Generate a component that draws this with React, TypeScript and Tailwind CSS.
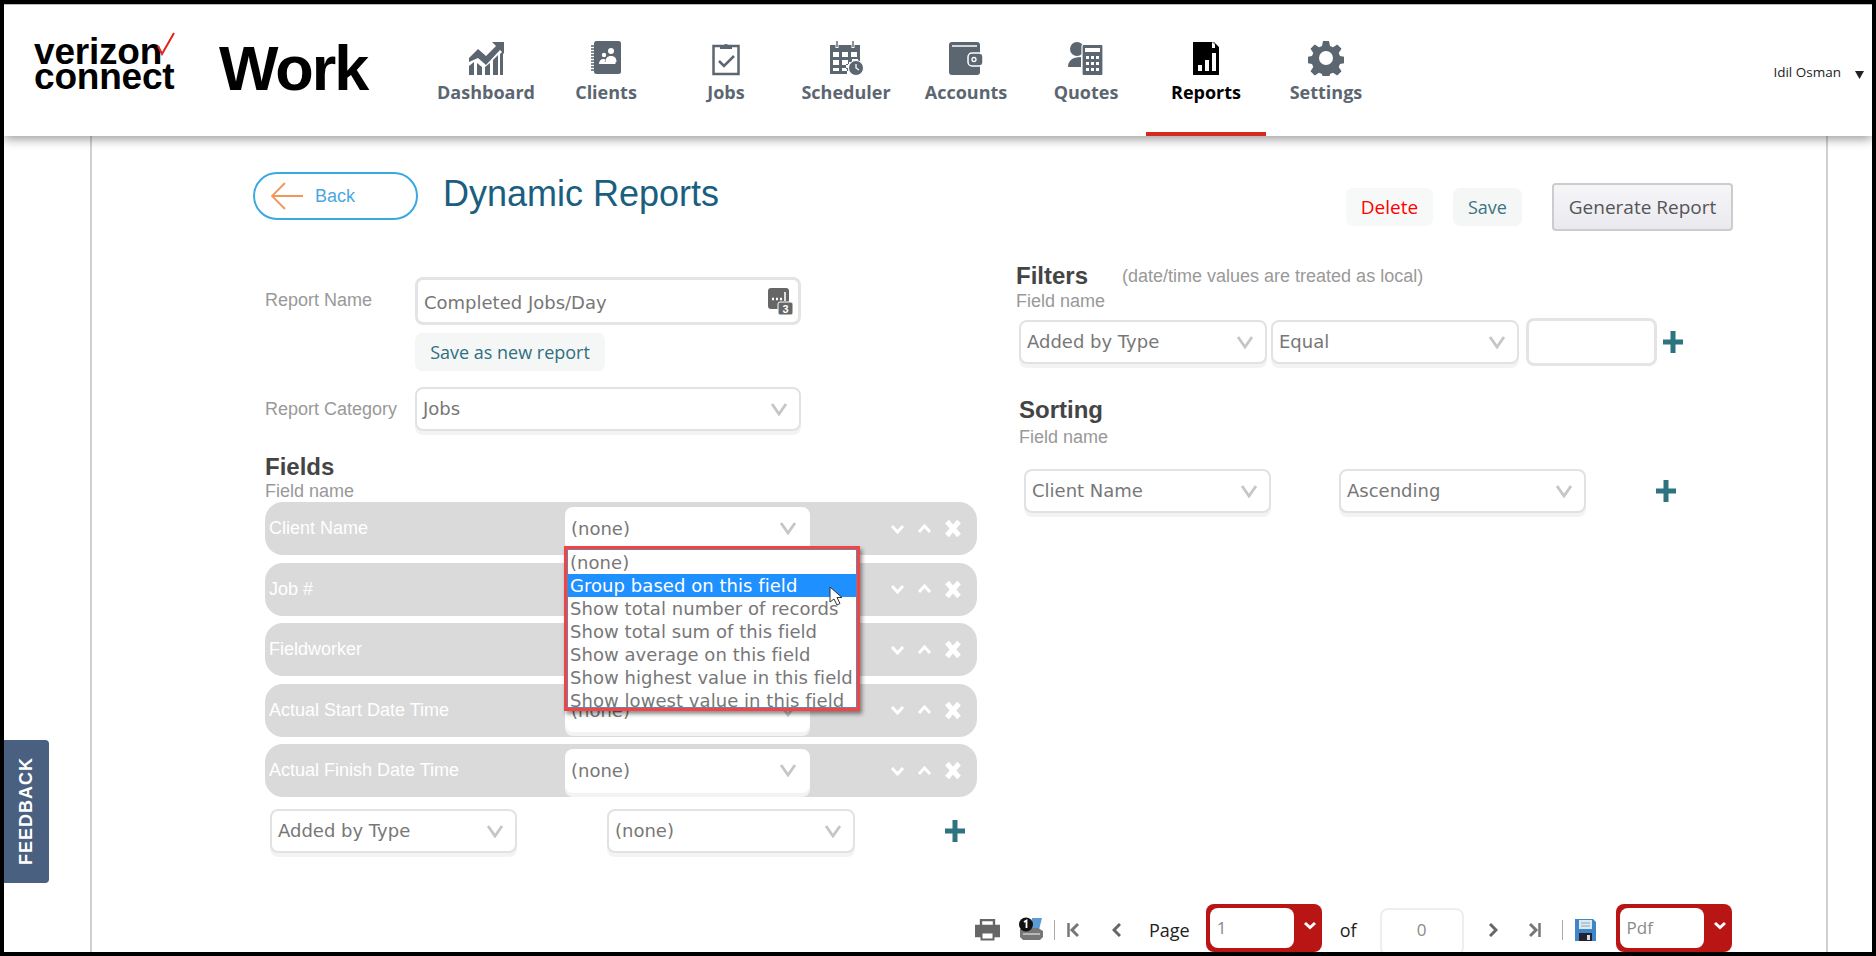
import { ReactNode } from "react";

const sans = "font-['Liberation_Sans',Arial,sans-serif]";
const deja = "font-['DejaVu_Sans',Verdana,sans-serif]";
const open = "font-['Open_Sans',sans-serif]";

function DashboardIcon() {
  return (
    <svg width="36" height="36" viewBox="0 0 36 36" fill="#5b6670">
      <path d="M1 35V26l5-4v13zM9 35V23l5 4v8zM17 35V27l5-4v12zM25 35V20l5-5v20zM32 35V14l3-3v24z" />
      <path d="M1 22V18l9-9 8 7 10-10-4-4h12v12l-4-4-14 15-8-7z" />
    </svg>
  );
}

function ClientsIcon() {
  return (
    <svg width="36" height="36" viewBox="0 0 36 36">
      <rect x="6" y="1" width="27" height="33" rx="2.500" fill="#5b6670" />
      <path d="M3 6h4M3 9h4M3 12h4M3 15h4M3 18h4M3 21h4M3 24h4M3 27h4M3 30h4" stroke="#5b6670" strokeWidth="1.400" />
      <circle cx="23" cy="11" r="3" fill="#fff" />
      <path d="M17.500 22c0-4 2-6 5.500-6s5.500 2 5.500 6z" fill="#fff" />
      <circle cx="16" cy="15" r="2.200" fill="#fff" />
      <path d="M11 24c0-3 1.500-5 4.500-5 1 0 1.500.3 2 .7L16 24z" fill="#fff" />
      <path d="M14 24c0-1 .5-1.500 1.500-2h12v2z" fill="#fff" />
    </svg>
  );
}

function JobsIcon() {
  return (
    <svg width="36" height="36" viewBox="0 0 36 36" fill="none">
      <rect x="5.500" y="6" width="25" height="28" stroke="#5b6670" strokeWidth="2.500" />
      <path d="M12 9V5h4a2.500 2.500 0 0 1 4 0h4v4z" fill="#5b6670" />
      <path d="M11 21l5 5 10-10" stroke="#5b6670" strokeWidth="2.500" />
    </svg>
  );
}

function SchedulerIcon() {
  return (
    <svg width="36" height="36" viewBox="0 0 36 36" fill="none">
      <path d="M2 5h30v17h-2v-3h-6v3h-3v2h-3v5h1v5H2zM5 12v5h6v-5zM14 12v5h6v-5zM23 12v5h6v-5zM5 20v5h6v-5zM14 20v5h6v-5zM5 28v3h6v-3zM14 28v3h6v-3z" fill="#5b6670" fillRule="evenodd" />
      <path d="M9 1v7M25 1v7" stroke="#fff" strokeWidth="3" />
      <path d="M9 1v6M25 1v6" stroke="#5b6670" strokeWidth="1.400" />
      <circle cx="28" cy="28" r="7.500" fill="#5b6670" stroke="#fff" strokeWidth="1" />
      <path d="M28 24v4l3 2" stroke="#fff" strokeWidth="1.300" />
    </svg>
  );
}

function AccountsIcon() {
  return (
    <svg width="36" height="36" viewBox="0 0 36 36">
      <rect x="1" y="2" width="31" height="33" rx="3" fill="#5b6670" />
      <path d="M4 6h25" stroke="#d5d8da" strokeWidth="2" />
      <rect x="20" y="13" width="15" height="13" rx="4" fill="#5b6670" stroke="#fff" strokeWidth="1.500" />
      <circle cx="26" cy="19.500" r="2" fill="none" stroke="#fff" strokeWidth="1.300" />
    </svg>
  );
}

function QuotesIcon() {
  return (
    <svg width="36" height="36" viewBox="0 0 36 36">
      <circle cx="9" cy="9" r="7" fill="#5b6670" />
      <path d="M0 27c0-6 4-10 13-10v10z" fill="#5b6670" />
      <rect x="14" y="4.500" width="21" height="31" rx="1.500" fill="#5b6670" stroke="#fff" strokeWidth="1.200" />
      <rect x="17" y="8" width="15" height="4" fill="#fff" />
      <path d="M18 16h3v3h-3zM23 16h3v3h-3zM28 16h3v3h-3zM18 22h3v3h-3zM23 22h3v3h-3zM28 22h3v3h-3zM18 28h3v3h-3zM23 28h3v3h-3zM28 28h3v3h-3z" fill="#fff" />
    </svg>
  );
}

function ReportsIcon() {
  return (
    <svg width="36" height="36" viewBox="0 0 36 36">
      <path d="M5 2h20l6 6v27H5z" fill="#000" />
      <path d="M24 2l7 6h-7z" fill="#fff" />
      <path d="M26 2l5 5v1h-4v-6z" fill="#000" />
      <path d="M10 25h4v6h-4zM17 20h4v11h-4zM24 13h4v18h-4z" fill="#fff" />
    </svg>
  );
}

function SettingsIcon() {
  return (
    <svg width="36" height="36" viewBox="0 0 36 36">
      <path
        fillRule="evenodd"
        fill="#5b6670"
        d="M15 1h6l1 5 3 1.300 4.300-2.800 4.200 4.200-2.800 4.300 1.300 3 5 1v6l-5 1-1.300 3 2.800 4.300-4.200 4.200-4.300-2.800-3 1.300-1 5h-6l-1-5-3-1.300-4.300 2.800-4.200-4.200 2.800-4.300-1.300-3-5-1v-6l5-1 1.300-3-2.800-4.300 4.200-4.200 4.300 2.800 3-1.300zM18 11a7 7 0 1 0 0 14 7 7 0 0 0 0-14z"
      />
    </svg>
  );
}

const navItems: { label: string; icon: ReactNode; active?: boolean }[] = [
  { label: "Dashboard", icon: <DashboardIcon /> },
  { label: "Clients", icon: <ClientsIcon /> },
  { label: "Jobs", icon: <JobsIcon /> },
  { label: "Scheduler", icon: <SchedulerIcon /> },
  { label: "Accounts", icon: <AccountsIcon /> },
  { label: "Quotes", icon: <QuotesIcon /> },
  { label: "Reports", icon: <ReportsIcon />, active: true },
  { label: "Settings", icon: <SettingsIcon /> },
];

function Chevron({ className = "" }: { className?: string }) {
  return (
    <svg width="18" height="13" viewBox="0 0 18 13" fill="none" className={className}>
      <path d="M2 1l7 10 7-10" stroke="#c6c6c6" strokeWidth="2.800" />
    </svg>
  );
}

function Select({ value, className = "", textClass = "pb-[2px]" }: { value?: string; className?: string; textClass?: string }) {
  return (
    <div className={`flex h-[44px] items-center justify-between rounded-[8px] border-2 border-[#e2e2e2] bg-white pl-[6px] pr-[11px] text-[18px] text-[#777] shadow-[0_4px_0_#f3f3f3] ${deja} ${className}`}>
      <span className={textClass}>{value}</span>
      <Chevron />
    </div>
  );
}

function Plus({ className = "" }: { className?: string }) {
  return (
    <svg width="20" height="22" viewBox="0 0 20 22" className={className}>
      <path d="M7.500 0h5v8.500H20v5h-7.500V22h-5v-8.500H0v-5h7.500z" fill="#2d7480" />
    </svg>
  );
}

function RowTools() {
  return (
    <div className="ml-auto mr-[15px] flex items-center gap-[12px]">
      <svg width="15" height="10" viewBox="0 0 15 10" fill="none"><path d="M2 2l5.500 6L13 2" stroke="#fff" strokeWidth="3" /></svg>
      <svg width="15" height="10" viewBox="0 0 15 10" fill="none"><path d="M2 8l5.500-6L13 8" stroke="#fff" strokeWidth="3" /></svg>
      <svg width="18" height="19" viewBox="0 0 18 19" fill="none"><path d="M3 2.500l12 14M15 2.500l-12 14" stroke="#fff" strokeWidth="5" /></svg>
    </div>
  );
}

const options = [
  "(none)",
  "Group based on this field",
  "Show total number of records",
  "Show total sum of this field",
  "Show average on this field",
  "Show highest value in this field",
  "Show lowest value in this field",
];

function FieldRow({ label, value, open: isOpen }: { label: string; value?: string; open?: boolean }) {
  return (
    <div className="flex h-[53px] items-center rounded-[18px] bg-[#dadada]">
      <div className={`ml-[4px] w-[296px] text-[18px] text-white ${sans}`}>{label}</div>
      <div className="relative">
        <Select value={value} textClass="" className="h-[39px] w-[245px] !border-0 !pl-[6px] !pr-[13px]" />
        {isOpen && (
          <div className="absolute left-[-1px] top-[39px] z-10 h-[165px] w-[296px] overflow-hidden border-[3px] border-[#f14545] bg-white shadow-[2px_3px_4px_rgba(0,0,0,0.45)]">
            <div className={`h-full border border-[#6b83a8] pt-[1px] text-[18px] tracking-[0.05px] text-[#777] ${deja}`}>
              {options.map((o, i) => (
                <div key={o} className={`h-[23px] whitespace-nowrap pl-[2px] leading-[24px] ${i === 1 ? "bg-[#1e90ff] text-white" : ""}`}>{o}</div>
              ))}
            </div>
            <svg width="14" height="20" viewBox="0 0 14 20" className="absolute left-[262px] top-[37px]">
              <path d="M1 1v15l4-3 3 6 3-1.500-3-6h5z" fill="#fff" stroke="#333" strokeWidth="1" />
            </svg>
          </div>
        )}
      </div>
      <RowTools />
    </div>
  );
}

function RedSelect({ value }: { value: string }) {
  return (
    <div className="flex h-[48px] w-[116px] items-start rounded-[8px] bg-[#b91515] p-[4px] pr-0">
      <div className="h-full w-[84px] rounded-[8px] bg-white pl-[7px] pt-[8px] text-[17px] leading-[24px] text-[#8a8a8a]">{value}</div>
      <svg width="14" height="9" viewBox="0 0 14 9" fill="none" className="ml-[9px] mt-[13px]"><path d="M2 2l5 4.500L12 2" stroke="#fff" strokeWidth="3" /></svg>
    </div>
  );
}

function PrintIcon() {
  return (
    <svg width="25" height="22" viewBox="0 0 25 22">
      <path d="M6 7V1h13v6M6 17H1V7h23v10h-5" fill="none" stroke="#666" strokeWidth="2.400" />
      <path d="M1 8h23v9h-5v-3H6v3H1z" fill="#666" />
      <rect x="6.500" y="13.500" width="12" height="7" fill="none" stroke="#666" strokeWidth="2" />
    </svg>
  );
}

function PrintQueueIcon() {
  return (
    <svg width="26" height="24" viewBox="0 0 26 24">
      <path d="M14 1h10l-3 12h-8z" fill="#5a9bd5" />
      <path d="M2 12l6-1h12l5 3v6l-3 3H5l-3-3z" fill="#777" />
      <path d="M5 17h17" stroke="#ccc" strokeWidth="1.500" />
      <circle cx="8" cy="7.500" r="7" fill="#111" />
      <path d="M6 5l2.500-1.500V11" stroke="#fff" strokeWidth="1.800" fill="none" />
    </svg>
  );
}

function SaveIcon() {
  return (
    <svg width="23" height="24" viewBox="0 0 23 24">
      <path d="M1 1h18l3 3v19H1z" fill="#3f86c6" />
      <rect x="5" y="2" width="13" height="9" fill="#dce8f3" />
      <path d="M7 5h9M7 8h9" stroke="#8aa" strokeWidth="1" />
      <rect x="5" y="15" width="13" height="8" fill="#223" />
      <rect x="13" y="17" width="3" height="5" fill="#ddd" />
    </svg>
  );
}

export default function App() {
  return (
    <div className={`h-[956px] w-[1876px] overflow-hidden bg-black pb-[4px] pl-[4px] pr-[4px] pt-[4px] ${sans}`}>
      <div className="relative flex h-full flex-col overflow-hidden bg-white">
        <header className="relative z-20 flex h-[132px] shrink-0 items-start border-t border-[#bbb] bg-white shadow-[0_3px_10px_rgba(0,0,0,0.4)]">
          <div className="ml-[30px] mt-[34px] w-[150px] text-[37px] font-bold leading-[25px] tracking-[-0.2px] text-black">
            <div className="relative">
              verizon
              <svg width="20" height="24" viewBox="0 0 20 24" className="absolute left-[122px] top-[-7px]">
                <path d="M2 14l4 8L18 1" fill="none" stroke="#e0261c" strokeWidth="2" />
              </svg>
            </div>
            <div>connect</div>
          </div>
          <div className="ml-[35px] mt-[28px] w-[207px] text-[63px] font-bold leading-[70px] tracking-[-2px] text-black">Work</div>
          <nav className="flex">
            {navItems.map((n) => (
              <div key={n.label} className={`flex h-[131px] w-[120px] flex-col items-center pt-[35px] ${n.active ? "border-b-4 border-[#d52b1e] text-black" : "text-[#5b6670]"}`}>
                {n.icon}
                <span className={`mt-[4px] text-[18px] font-bold leading-[24px] ${open}`}>{n.label}</span>
              </div>
            ))}
          </nav>
          <div className={`ml-auto mr-[8px] mt-[57px] flex items-center text-[13.500px] text-[#222] ${open}`}>
            Idil Osman
            <svg width="9" height="8" viewBox="0 0 9 8" className="ml-[14px] mt-[6px]"><path d="M0 0h9L4.500 8z" fill="#222" /></svg>
          </div>
        </header>

        <main className="ml-[86px] mr-[44px] min-h-0 flex-1 border-x-2 border-[#d0d0d0]">
          <div className="flex items-start pl-[161px] pr-[93px] pt-[36px]">
            <div className="flex h-[48px] w-[165px] items-center rounded-full border-2 border-[#3aa9e0] pl-[15px]">
              <svg width="34" height="28" viewBox="0 0 34 28" fill="none"><path d="M33 14H2M15 1L2 14l13 13" stroke="#f0975a" strokeWidth="1.800" /></svg>
              <span className="ml-[11px] text-[18px] text-[#4aa8df]">Back</span>
            </div>
            <h1 className="ml-[25px] text-[36px] leading-[44px] text-[#1a5e80]">Dynamic Reports</h1>
            <div className={`ml-auto mt-[11px] flex items-center ${open}`}>
              <div className="flex h-[38px] w-[87px] items-center justify-center rounded-[7px] bg-[#f7f8f8] text-[19px] text-[#f00]">Delete</div>
              <div className="ml-[20px] flex h-[38px] w-[69px] items-center justify-center rounded-[7px] bg-[#f5f7f7] text-[18px] text-[#3b7480]">Save</div>
              <div className="ml-[30px] flex h-[48px] w-[181px] items-center justify-center rounded-[4px] border-2 border-[#ccc] bg-gradient-to-b from-[#f6f6f9] to-[#e9e9ef] text-[19px] text-[#555]">Generate Report</div>
            </div>
          </div>

          <div className="mt-[32px] flex">
            <section className="ml-[173px] w-[712px] pt-[14px]">
              <div className="flex items-start">
                <label className="w-[150px] pt-[10px] text-[18px] text-[#999]">Report Name</label>
                <div className={`flex h-[48px] w-[386px] items-center justify-between rounded-[8px] border-[3px] border-[#e4e4e4] bg-white pl-[6px] pr-[5px] text-[18px] text-[#777] ${deja}`}>
                  <span className="pt-[3px]">Completed Jobs/Day</span>
                  <svg width="25" height="27" viewBox="0 0 25 27">
                    <rect x="0" y="0" width="21" height="21" rx="3" fill="#666" />
                    <path d="M4 11h2M8 11h2M12 11h2" stroke="#fff" strokeWidth="2.400" />
                    <path d="M17 4v9" stroke="#fff" strokeWidth="1.600" />
                    <rect x="10" y="14" width="15" height="13" rx="2" fill="#666" stroke="#fff" strokeWidth="1" />
                    <text x="17.500" y="25" fontSize="11" fontWeight="700" fill="#fff" textAnchor="middle" fontFamily="Liberation Sans">3</text>
                  </svg>
                </div>
              </div>
              <div className={`ml-[150px] mt-[8px] flex h-[38px] w-[190px] items-center justify-center rounded-[7px] bg-[#f5f7f7] text-[18px] text-[#2f6f80] ${open}`}>Save as new report</div>
              <div className="mt-[16px] flex items-center">
                <label className="w-[150px] text-[18px] text-[#999]">Report Category</label>
                <Select value="Jobs" className="w-[386px]" />
              </div>
              <h2 className="mt-[22px] h-[28px] text-[24px] font-bold leading-[28px] text-[#444]">Fields</h2>
              <div className="h-[21px] text-[18px] leading-[21px] text-[#999]">Field name</div>
              <div className="flex flex-col gap-[7.500px]">
                <FieldRow label="Client Name" value="(none)" open />
                <FieldRow label="Job #" />
                <FieldRow label="Fieldworker" />
                <FieldRow label="Actual Start Date Time" value="(none)" />
                <FieldRow label="Actual Finish Date Time" value="(none)" />
              </div>
              <div className="ml-[5px] mt-[12px] flex items-center">
                <Select value="Added by Type" className="w-[247px]" />
                <Select value="(none)" className="ml-[90px] w-[248px]" />
                <Plus className="ml-[90px]" />
              </div>
            </section>

            <section className="ml-[39px] w-[700px]">
              <div className="flex items-center">
                <h2 className="h-[26px] w-[106px] text-[24px] font-bold leading-[24px] text-[#444]">Filters</h2>
                <span className="text-[18px] text-[#999]">(date/time values are treated as local)</span>
              </div>
              <div className="h-[22px] text-[18px] leading-[22px] text-[#999]">Field name</div>
              <div className="ml-[3px] mt-[6px] flex items-center">
                <Select value="Added by Type" className="w-[248px]" />
                <Select value="Equal" className="ml-[4px] w-[248px]" />
                <div className="ml-[7px] h-[48px] w-[131px] rounded-[8px] border-[3px] border-[#e4e4e4] bg-white" />
                <Plus className="ml-[6px]" />
              </div>
              <h2 className="ml-[3px] mt-[31px] h-[28px] text-[24px] font-bold leading-[26px] text-[#444]">Sorting</h2>
              <div className="ml-[3px] mt-[1px] h-[22px] text-[18px] leading-[22px] text-[#999]">Field name</div>
              <div className="ml-[8px] mt-[21px] flex items-center">
                <Select value="Client Name" className="w-[247px]" />
                <Select value="Ascending" className="ml-[68px] w-[247px]" />
                <Plus className="ml-[70px]" />
              </div>
            </section>
          </div>
        </main>

        <aside className={`absolute left-0 top-[736px] z-10 flex h-[143px] w-[45px] items-center justify-center rounded-r-[4px] bg-[#4a6080] text-[18px] font-bold tracking-[1px] text-white ${sans}`}>
          <span className="rotate-180 [writing-mode:vertical-rl]">FEEDBACK</span>
        </aside>

        <div className={`absolute left-[971px] top-[900px] z-10 flex h-[48px] items-start text-[17px] text-[#222] ${open}`}>
          <div className="mt-[15px]"><PrintIcon /></div>
          <div className="ml-[18px] mt-[13px]"><PrintQueueIcon /></div>
          <div className="ml-[10px] mt-[16px] h-[20px] w-px bg-[#aaa]" />
          <svg width="12" height="16" viewBox="0 0 12 16" fill="none" className="ml-[12px] mt-[18px]"><path d="M1.500 1v14" stroke="#777" strokeWidth="2.500" /><path d="M11 2L5 8l6 6" stroke="#777" strokeWidth="3" /></svg>
          <svg width="9" height="14" viewBox="0 0 9 14" fill="none" className="ml-[33px] mt-[19px]"><path d="M8 1L2 7l6 6" stroke="#666" strokeWidth="3" /></svg>
          <span className="ml-[28px] mt-[14px] text-[18px] leading-[24px]">Page</span>
          <div className="ml-[16px]"><RedSelect value="1" /></div>
          <span className="ml-[18px] mt-[14px] text-[18px] leading-[24px]">of</span>
          <div className="ml-[23px] mt-[4px] flex h-[48px] w-[84px] justify-center rounded-[8px] border-2 border-[#eee] pt-[8px] leading-[24px] text-[#8a8a8a]">0</div>
          <svg width="9" height="14" viewBox="0 0 9 14" fill="none" className="ml-[25px] mt-[19px]"><path d="M1 1l6 6-6 6" stroke="#666" strokeWidth="3" /></svg>
          <svg width="12" height="16" viewBox="0 0 12 16" fill="none" className="ml-[31px] mt-[18px]"><path d="M10.500 1v14" stroke="#777" strokeWidth="2.500" /><path d="M1 2l6 6-6 6" stroke="#777" strokeWidth="3" /></svg>
          <div className="ml-[21px] mt-[16px] h-[20px] w-px bg-[#aaa]" />
          <div className="ml-[11px] mt-[14px]"><SaveIcon /></div>
          <div className="ml-[19px]"><RedSelect value="Pdf" /></div>
        </div>
      </div>
    </div>
  );
}
